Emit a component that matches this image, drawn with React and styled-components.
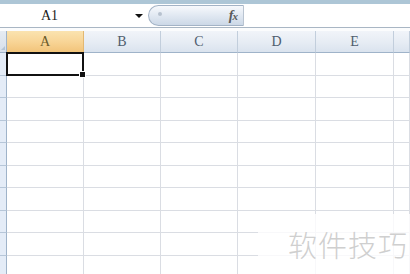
import React from "react";
import styled, { createGlobalStyle } from "styled-components";

const GlobalStyle = createGlobalStyle`
  html, body {
    margin: 0;
    padding: 0;
    background: #ffffff;
    overflow: hidden;
  }
  body {
    width: 410px;
    height: 274px;
    font-family: "Liberation Serif", "DejaVu Serif", serif;
  }
`;

const columns = ["A", "B", "C", "D", "E", ""];
const rowCount = 10;

export default function App() {
  return (
    <Page>
      <GlobalStyle />
      <TopStrip />
      <FormulaBar>
        <NameBox>
          <NameText>A1</NameText>
          <DropArrow />
        </NameBox>
        <FxPill>
          <PillDot />
          <FxLabel>
            f<small>x</small>
          </FxLabel>
        </FxPill>
        <FormulaInput />
      </FormulaBar>
      <Gap />
      <Sheet>
        <Corner>
          <CornerTriangle />
        </Corner>
        {columns.map((c, i) => (
          <ColHead key={i} active={c === "A"}>
            {c}
          </ColHead>
        ))}
        {Array.from({ length: rowCount }).map((_, r) => (
          <React.Fragment key={r}>
            <RowHead />
            {columns.map((c, i) => (
              <Cell key={i} selected={r === 0 && c === "A"}>
                {r === 0 && c === "A" && <FillHandle />}
              </Cell>
            ))}
          </React.Fragment>
        ))}
      </Sheet>
      <Watermark>软件技巧</Watermark>
    </Page>
  );
}

const Page = styled.div`
  position: relative;
  width: 410px;
  height: 274px;
  overflow: hidden;
  background: #fff;
`;

const TopStrip = styled.div`
  height: 4px;
  background: #adc6d6;
`;

const FormulaBar = styled.div`
  display: flex;
  height: 23px;
  border-bottom: 1px solid #a9b6c4;
  background: #fff;
`;

const NameBox = styled.div`
  width: 148px;
  display: flex;
  align-items: center;
  position: relative;
`;

const NameText = styled.span`
  margin-left: 41px;
  font-size: 14px;
  color: #1a1a1a;
`;

const DropArrow = styled.span`
  position: absolute;
  left: 135px;
  top: 10px;
  width: 0;
  height: 0;
  border-left: 4px solid transparent;
  border-right: 4px solid transparent;
  border-top: 4px solid #111;
`;

const FxPill = styled.div`
  position: relative;
  width: 96px;
  margin-top: 1px;
  height: 21px;
  box-sizing: border-box;
  border: 1px solid #a3b3c6;
  border-right: 1px solid #b9c4d1;
  border-radius: 11px 0 0 11px;
  background: linear-gradient(#f7f9fc 0%, #e3eaf3 45%, #ccd8e7 100%);
  display: flex;
  align-items: center;
  justify-content: flex-end;
  padding-right: 6px;
`;

const PillDot = styled.span`
  position: absolute;
  left: 9px;
  top: 6px;
  width: 4px;
  height: 4px;
  border-radius: 50%;
  background: #b7c2cf;
`;

const FxLabel = styled.span`
  font-family: "Liberation Serif", serif;
  font-style: italic;
  font-weight: bold;
  font-size: 14px;
  color: #5a5a5a;
  letter-spacing: -1px;
  small {
    font-size: 11px;
  }
`;

const FormulaInput = styled.div`
  flex: 1;
  background: #fff;
`;

const Gap = styled.div`
  height: 3px;
  background: #fbfcfd;
`;

const Sheet = styled.div`
  display: grid;
  grid-template-columns: 7px 77px 77px 77px 78px 78px 1fr;
  grid-template-rows: 22px;
  grid-auto-rows: 22.5px;
`;

const Corner = styled.div`
  box-sizing: border-box;
  background: linear-gradient(#e6ecf3, #d6dfea);
  border-right: 1px solid #9fb3c9;
  border-bottom: 1px solid #9fb3c9;
  position: relative;
`;

const CornerTriangle = styled.span`
  position: absolute;
  right: 1px;
  bottom: 2px;
  width: 0;
  height: 0;
  border-left: 4px solid transparent;
  border-bottom: 4px solid #b5c4d4;
`;

const ColHead = styled.div`
  box-sizing: border-box;
  display: flex;
  align-items: center;
  justify-content: center;
  font-size: 14px;
  color: ${({ active }) => (active ? "#6a5a2a" : "#4f5d6e")};
  background: ${({ active }) =>
    active
      ? "linear-gradient(#fae3b0 0%, #f8d597 50%, #f2c47a 100%)"
      : "linear-gradient(#f1f4f9 0%, #e6ecf4 55%, #dae3ee 100%)"};
  border-right: 1px solid ${({ active }) => (active ? "#e3b872" : "#c2cedc")};
  border-bottom: 1px solid ${({ active }) => (active ? "#f0b860" : "#9fb3c9")};
`;

const RowHead = styled.div`
  box-sizing: border-box;
  background: #e4ecf7;
  border-right: 1px solid #9fb3c9;
  border-bottom: 1px solid #b6c6d8;
`;

const Cell = styled.div`
  position: relative;
  box-sizing: border-box;
  border-right: 1px solid #dadde3;
  border-bottom: 1px solid #dadde3;
  background: #fff;
  ${({ selected }) =>
    selected &&
    `
    border: 2px solid #111;
    margin-left: -1px;
    margin-top: -1px;
    z-index: 2;
  `}
`;

const FillHandle = styled.span`
  position: absolute;
  right: -4px;
  bottom: -4px;
  width: 5px;
  height: 5px;
  background: #111;
  border: 1px solid #fff;
`;

const Watermark = styled.div`
  position: absolute;
  left: 258px;
  top: 214px;
  width: 152px;
  height: 60px;
  background: rgba(255, 255, 255, 0.8);
  display: flex;
  align-items: center;
  justify-content: flex-end;
  padding-right: 2px;
  box-sizing: border-box;
  font-family: "Noto Sans CJK SC", sans-serif;
  font-weight: 300;
  font-size: 29px;
  letter-spacing: 1px;
  color: #cfcfcf;
`;
